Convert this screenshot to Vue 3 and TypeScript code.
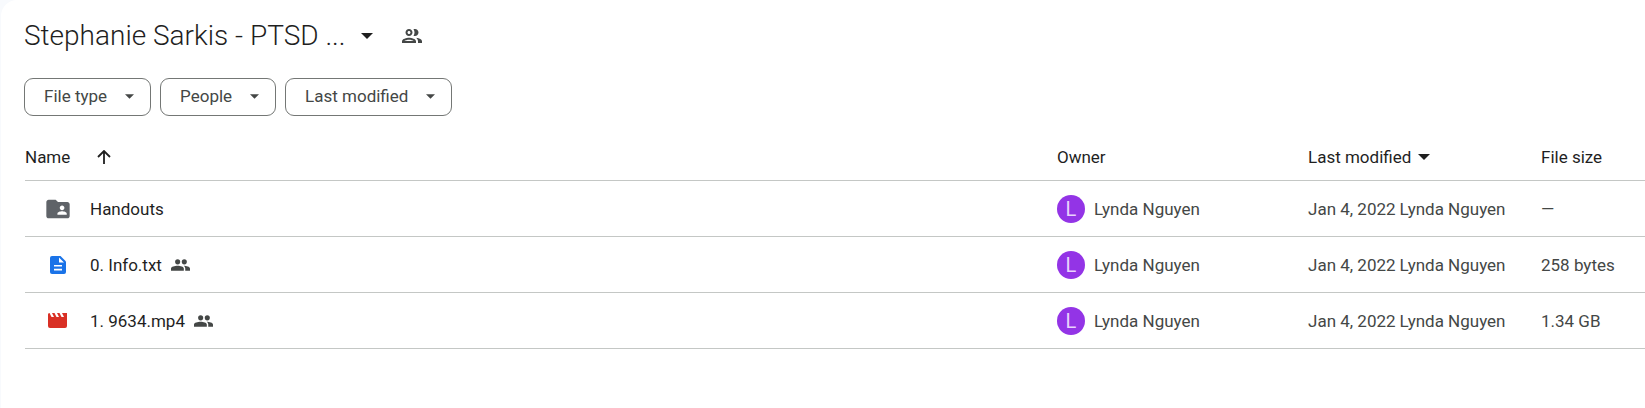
<script setup lang="ts">
type Kind = 'folder' | 'text' | 'video'

interface DriveFile {
  name: string
  kind: Kind
  shared: boolean
  owner: string
  modified: string
  size: string
}

const filters: string[] = ['File type', 'People', 'Last modified']

const files: DriveFile[] = [
  { name: 'Handouts', kind: 'folder', shared: false, owner: 'Lynda Nguyen', modified: 'Jan 4, 2022', size: '—' },
  { name: '0. Info.txt', kind: 'text', shared: true, owner: 'Lynda Nguyen', modified: 'Jan 4, 2022', size: '258 bytes' },
  { name: '1. 9634.mp4', kind: 'video', shared: true, owner: 'Lynda Nguyen', modified: 'Jan 4, 2022', size: '1.34 GB' },
]
</script>

<template>
  <main class="panel">
    <header class="title-bar">
      <h1 class="title">
        <button type="button" class="title-button">
          <span>Stephanie Sarkis - PTSD ...</span>
          <svg width="12" height="6" viewBox="0 0 12 6" aria-hidden="true"><path d="M0 0h12L6 6z" /></svg>
        </button>
      </h1>
      <button type="button" class="icon-button" aria-label="Manage access">
        <svg width="24" height="24" viewBox="0 0 24 24" aria-hidden="true">
          <path d="M9 12c1.93 0 3.5-1.57 3.5-3.5S10.93 5 9 5 5.500 6.570 5.500 8.500 7.070 12 9 12zm0-5c.83 0 1.500.67 1.500 1.500S9.830 10 9 10s-1.500-.67-1.500-1.500S8.170 7 9 7zm0 6.750c-2.340 0-7 1.170-7 3.500V19h14v-1.750c0-2.330-4.660-3.500-7-3.500zM4.340 17c.84-.58 2.870-1.250 4.660-1.250s3.820.67 4.660 1.250H4.340zm11.700-3.190c1.160.84 1.960 1.960 1.960 3.440V19h4v-1.750c0-2.020-3.500-3.170-5.960-3.440zM15 12c1.930 0 3.500-1.570 3.500-3.500S16.930 5 15 5c-.54 0-1.040.13-1.500.35.63.89 1 1.980 1 3.150s-.37 2.260-1 3.150c.46.22.96.35 1.500.35z" />
        </svg>
      </button>
    </header>

    <nav class="filters" aria-label="Filters">
      <button v-for="filter in filters" :key="filter" type="button" class="chip">
        <span>{{ filter }}</span>
        <svg width="9" height="5" viewBox="0 0 10 5" aria-hidden="true"><path d="M0 0h10L5 5z" /></svg>
      </button>
    </nav>

    <table class="files">
      <colgroup>
        <col />
        <col class="col-owner" />
        <col class="col-modified" />
        <col class="col-size" />
      </colgroup>
      <thead>
        <tr>
          <th scope="col">
            <button type="button" class="sort sort-name">
              <span>Name</span>
              <svg width="14" height="14" viewBox="0 0 14 14" aria-hidden="true">
                <path d="M7 14V1.500M1 7l6-6 6 6" fill="none" stroke="currentColor" stroke-width="1.800" />
              </svg>
            </button>
          </th>
          <th scope="col">Owner</th>
          <th scope="col">
            <button type="button" class="sort">
              <span>Last modified</span>
              <svg width="12" height="6" viewBox="0 0 12 6" aria-hidden="true"><path d="M0 0h12L6 6z" /></svg>
            </button>
          </th>
          <th scope="col">File size</th>
        </tr>
      </thead>
      <tbody>
        <tr v-for="file in files" :key="file.name">
          <td>
            <div class="name">
              <span class="kind">
                <svg v-if="file.kind === 'folder'" width="28" height="28" viewBox="0 0 24 24" aria-hidden="true">
                  <path fill="#5f6368" d="M20 6h-8l-2-2H4c-1.100 0-1.990.9-1.990 2L2 18c0 1.100.9 2 2 2h16c1.100 0 2-.9 2-2V8c0-1.100-.9-2-2-2z" />
                  <path fill="#fff" d="M15.500 9c1.100 0 2 .9 2 2s-.9 2-2 2-2-.9-2-2 .9-2 2-2zm4 8h-8v-1c0-1.330 2.670-2 4-2s4 .67 4 2v1z" />
                </svg>
                <svg v-else-if="file.kind === 'text'" width="16" height="18" viewBox="0 0 16 18" aria-hidden="true">
                  <path fill="#1a73e8" d="M2 0h8.500L16 5.500V16a2 2 0 0 1-2 2H2a2 2 0 0 1-2-2V2a2 2 0 0 1 2-2z" />
                  <path fill="#fff" d="M9 1.500V6.500h5zM4 9h8v1.600H4zM4 12.800h8v1.600H4z" />
                </svg>
                <svg v-else width="19" height="15" viewBox="0 0 19 15" aria-hidden="true">
                  <path fill="#d93025" d="M1.500 0L3.500 4H6L4 0h2.500l2 4H11L9 0h2.500l2 4H16l-2-4h5v13a2 2 0 0 1-2 2H2a2 2 0 0 1-2-2V1.500C0 .7.700 0 1.500 0z" />
                </svg>
              </span>
              <span>{{ file.name }}</span>
              <svg v-if="file.shared" class="shared" width="19" height="12" viewBox="0 0 20 12" role="img" aria-label="Shared">
                <path d="M7 0a2.700 2.700 0 1 1 0 5.400A2.700 2.700 0 0 1 7 0zM14 0a2.700 2.700 0 1 1 0 5.400A2.700 2.700 0 0 1 14 0zM0 12V9.800C0 7.800 4 6.800 7 6.800s6.500 1 6.500 3V12zM15 12V9.800c0-1.200-.6-2.200-1.600-3C16 6.800 20 7.800 20 9.800V12z" />
              </svg>
            </div>
          </td>
          <td>
            <div class="owner">
              <span class="avatar" aria-hidden="true">{{ file.owner.charAt(0) }}</span>
              <span>{{ file.owner }}</span>
            </div>
          </td>
          <td>
            <div class="modified">
              <span>{{ file.modified }}</span>
              <span>{{ file.owner }}</span>
            </div>
          </td>
          <td>{{ file.size }}</td>
        </tr>
      </tbody>
    </table>
  </main>
</template>

<style>
body {
  background: #f8fafd;
}
</style>

<style scoped>
.panel {
  box-sizing: border-box;
  min-height: 100vh;
  margin-left: 1px;
  padding: 16px 0 24px 23px;
  border-top-left-radius: 16px;
  background: #fff;
  color: #1f1f1f;
  font: 400 17px/24px Roboto, "Liberation Sans", sans-serif;
}

button {
  margin: 0;
  padding: 0;
  border: 0;
  background: none;
  color: inherit;
  font: inherit;
  cursor: pointer;
}

svg {
  display: block;
  flex: none;
  fill: currentColor;
}

.title-bar,
.title-button,
.filters,
.chip,
.sort,
.name,
.owner,
.modified {
  display: flex;
  align-items: center;
}

.title-bar {
  gap: 27px;
  height: 40px;
}

.title {
  margin: 0;
  font: inherit;
}

.title-button {
  gap: 15px;
  font-size: 28px;
  font-weight: 300;
  line-height: 40px;
}

.icon-button {
  color: #444746;
}

.filters {
  gap: 9px;
  margin-top: 22px;
}

.chip {
  gap: 18px;
  height: 38px;
  padding: 0 16px 2px 19px;
  border: 1px solid #747775;
  border-radius: 9px;
  color: #444746;
}

.files {
  width: calc(100% - 1px);
  margin: 17px 0 0 1px;
  border-collapse: collapse;
  table-layout: fixed;
}

.col-owner {
  width: 251px;
}

.col-modified {
  width: 233px;
}

.col-size {
  width: 104px;
}

th,
td {
  height: 55px;
  padding: 0;
  border-bottom: 1px solid #c4c7c5;
  text-align: left;
  white-space: nowrap;
}

th {
  height: 47px;
  font-weight: 400;
}

td {
  color: #444746;
}

.sort {
  gap: 7px;
}

.sort-name {
  gap: 27px;
}

.name {
  color: #1f1f1f;
}

.kind {
  display: flex;
  justify-content: center;
  width: 65px;
}

.shared {
  margin-left: 9px;
  color: #444746;
}

.owner {
  gap: 9px;
}

.avatar {
  width: 28px;
  border-radius: 50%;
  background: #9334e6;
  color: #e9d2fd;
  font-size: 20px;
  line-height: 28px;
  text-align: center;
}

.modified {
  gap: 4px;
}
</style>
